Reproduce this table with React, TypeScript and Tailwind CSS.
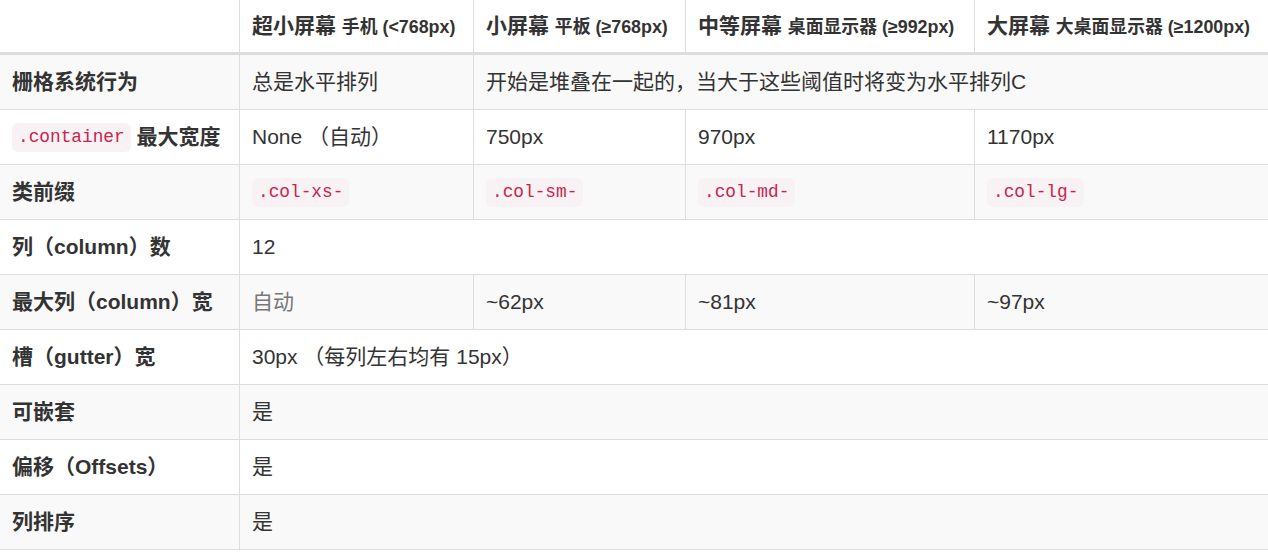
import React from "react";

const Code = ({ children }: { children: React.ReactNode }) => (
  <code className="inline-block rounded-[6px] bg-[#f9f2f4] px-[6px] py-[3px] align-middle font-['Liberation_Mono','DejaVu_Sans_Mono',monospace] text-[17.8px] font-normal leading-[23px] text-[#c7254e]">
    {children}
  </code>
);

const td = "border-b border-r border-[#dddddd] px-3 align-middle h-[55px]";
const tdLast = "border-b border-[#dddddd] px-3 align-middle h-[55px]";
const th = "border-b border-r border-[#dddddd] px-3 align-middle h-[55px] text-left font-bold";

export default function App() {
  const font = "font-['Liberation_Sans','Noto_Sans_CJK_SC',sans-serif]";
  return (
    <div className={`w-[1268px] h-[552px] overflow-hidden bg-white text-[21px] leading-[30px] text-[#333333] ${font}`}>
      <table className="w-[1268px] table-fixed border-separate border-spacing-0">
        <colgroup>
          <col className="w-[240px]" />
          <col className="w-[234px]" />
          <col className="w-[212px]" />
          <col className="w-[289px]" />
          <col className="w-[293px]" />
        </colgroup>
        <thead>
          <tr>
            <th className="h-[55px] border-b-[3px] border-r border-[#dddddd] px-3"></th>
            <th className="h-[55px] border-b-[3px] border-r border-[#dddddd] px-3 text-left font-bold whitespace-nowrap">
              超小屏幕 <span className="text-[17.85px]">手机 (&lt;768px)</span>
            </th>
            <th className="h-[55px] border-b-[3px] border-r border-[#dddddd] px-3 text-left font-bold whitespace-nowrap">
              小屏幕 <span className="text-[17.85px]">平板 (≥768px)</span>
            </th>
            <th className="h-[55px] border-b-[3px] border-r border-[#dddddd] px-3 text-left font-bold whitespace-nowrap">
              中等屏幕 <span className="text-[17.85px]">桌面显示器 (≥992px)</span>
            </th>
            <th className="h-[55px] border-b-[3px] border-[#dddddd] px-3 text-left font-bold whitespace-nowrap">
              大屏幕 <span className="text-[17.85px]">大桌面显示器 (≥1200px)</span>
            </th>
          </tr>
        </thead>
        <tbody>
          <tr className="bg-[#f9f9f9]">
            <th className={th}>栅格系统行为</th>
            <td className={td}>总是水平排列</td>
            <td className={tdLast} colSpan={3}>开始是堆叠在一起的，当大于这些阈值时将变为水平排列C</td>
          </tr>
          <tr>
            <th className={`${th} whitespace-nowrap`}>
              <Code>.container</Code> 最大宽度
            </th>
            <td className={td}>None （自动）</td>
            <td className={td}>750px</td>
            <td className={td}>970px</td>
            <td className={tdLast}>1170px</td>
          </tr>
          <tr className="bg-[#f9f9f9]">
            <th className={th}>类前缀</th>
            <td className={td}><Code>.col-xs-</Code></td>
            <td className={td}><Code>.col-sm-</Code></td>
            <td className={td}><Code>.col-md-</Code></td>
            <td className={tdLast}><Code>.col-lg-</Code></td>
          </tr>
          <tr>
            <th className={`${th} whitespace-nowrap`}>列（column）数</th>
            <td className={tdLast} colSpan={4}>12</td>
          </tr>
          <tr className="bg-[#f9f9f9]">
            <th className={`${th} whitespace-nowrap`}>最大列（column）宽</th>
            <td className={`${td} text-[#777777]`}>自动</td>
            <td className={td}>~62px</td>
            <td className={td}>~81px</td>
            <td className={tdLast}>~97px</td>
          </tr>
          <tr>
            <th className={`${th} whitespace-nowrap`}>槽（gutter）宽</th>
            <td className={tdLast} colSpan={4}>30px （每列左右均有 15px）</td>
          </tr>
          <tr className="bg-[#f9f9f9]">
            <th className={th}>可嵌套</th>
            <td className={tdLast} colSpan={4}>是</td>
          </tr>
          <tr>
            <th className={`${th} whitespace-nowrap`}>偏移（Offsets）</th>
            <td className={tdLast} colSpan={4}>是</td>
          </tr>
          <tr className="bg-[#f9f9f9]">
            <th className={th}>列排序</th>
            <td className={tdLast} colSpan={4}>是</td>
          </tr>
        </tbody>
      </table>
    </div>
  );
}
